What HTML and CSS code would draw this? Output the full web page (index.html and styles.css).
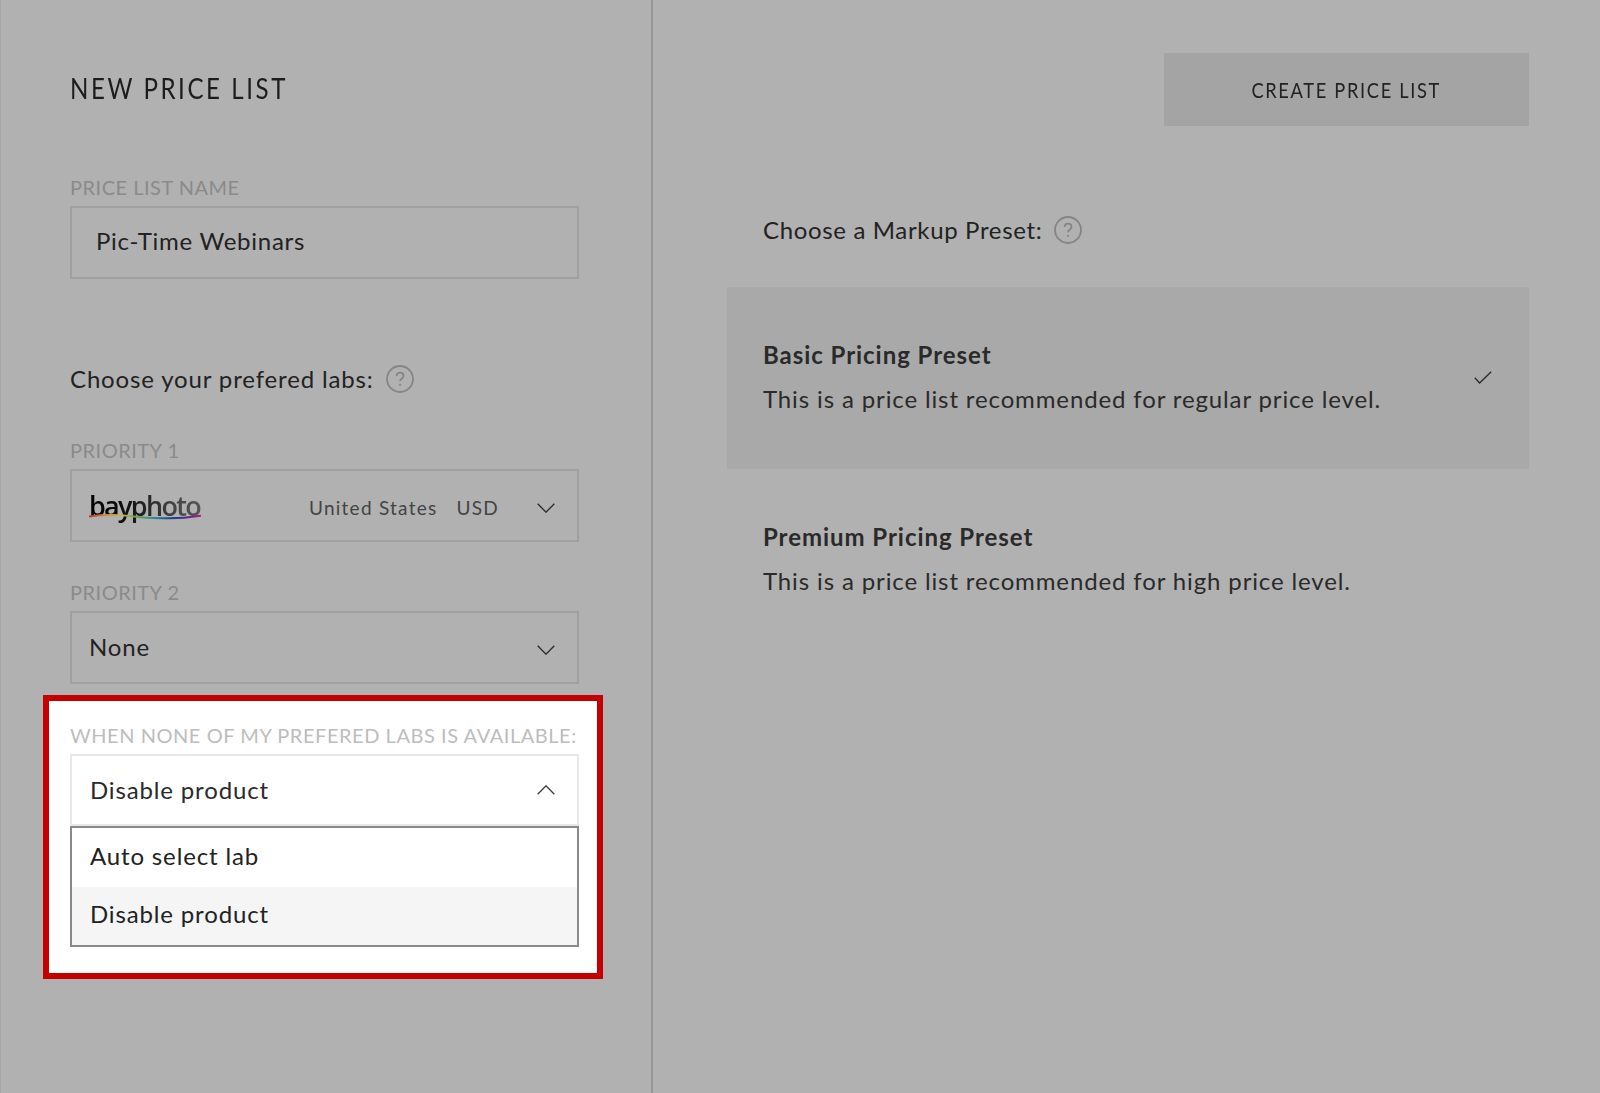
FILE: index.html
```html
<!DOCTYPE html>
<html lang="en">
<head>
<meta charset="utf-8">
<title>New Price List</title>
<link rel="stylesheet" href="styles.css">
</head>
<body>
<main class="page">
  <section class="left">
    <h1 class="title">NEW PRICE LIST</h1>
    <div class="field first">
      <label class="label">PRICE LIST NAME</label>
      <div class="box name"><span class="value">Pic-Time Webinars</span></div>
    </div>
    <div class="prompt labs">Choose your prefered labs:
      <svg class="help" viewBox="0 0 28 28"><circle cx="14" cy="14" r="13" fill="none" stroke="#858585" stroke-width="1.8"/><path d="M10.600 10.800c.2-2 1.600-3.100 3.500-3.100 2 0 3.400 1.200 3.400 3 0 1.400-.8 2.200-1.900 3-1 .7-1.500 1.300-1.500 2.600" fill="none" stroke="#858585" stroke-width="1.800"/><circle cx="14.100" cy="19.800" r="1.100" fill="#858585"/></svg>
    </div>
    <div class="field p1">
      <label class="label">PRIORITY 1</label>
      <div class="box select">
        <div class="logo">
          <span class="logo-text">bayphoto</span>
          <svg class="wave" viewBox="0 0 112 6" preserveAspectRatio="none"><defs><linearGradient id="rainbow"><stop offset="0" stop-color="#b5392c"/><stop offset=".14" stop-color="#d8873a"/><stop offset=".28" stop-color="#c9b93f"/><stop offset=".42" stop-color="#6f9f4a"/><stop offset=".58" stop-color="#2f8a9a"/><stop offset=".74" stop-color="#1d3f8f"/><stop offset=".88" stop-color="#5a2a8c"/><stop offset="1" stop-color="#b21d7c"/></linearGradient></defs><path d="M0 2.500C15 .5 30 .5 45 2.500S60 3.500 75 4.200 100 3.500 112 1.800" fill="none" stroke="url(#rainbow)" stroke-width="2"/></svg>
        </div>
        <span class="lab-meta">United States</span>
        <span class="lab-cur">USD</span>
        <svg class="chev" viewBox="0 0 18 10"><path d="M.7.7 9 9.200 17.300.7" fill="none" stroke="#2a2a2a" stroke-width="1.300"/></svg>
      </div>
    </div>
    <div class="field p2">
      <label class="label">PRIORITY 2</label>
      <div class="box select"><span class="value">None</span>
        <svg class="chev" viewBox="0 0 18 10"><path d="M.7.7 9 9.200 17.300.7" fill="none" stroke="#2a2a2a" stroke-width="1.300"/></svg>
      </div>
    </div>
    <div class="highlight">
      <label class="label light">WHEN NONE OF MY PREFERED LABS IS AVAILABLE:</label>
      <div class="box select open"><span class="value">Disable product</span>
        <svg class="chev" viewBox="0 0 18 10"><path d="M.7 9.300 9 .8l8.300 8.500" fill="none" stroke="#3a3a3a" stroke-width="1.300"/></svg>
      </div>
      <div class="menu">
        <div class="option"><span class="value">Auto select lab</span></div>
        <div class="option active"><span class="value">Disable product</span></div>
      </div>
    </div>
  </section>
  <section class="right">
    <div class="actions"><button class="create"><span class="create-text">CREATE PRICE LIST</span></button></div>
    <div class="prompt markup">Choose a Markup Preset:
      <svg class="help" viewBox="0 0 28 28"><circle cx="14" cy="14" r="13" fill="none" stroke="#858585" stroke-width="1.8"/><path d="M10.600 10.800c.2-2 1.600-3.100 3.500-3.100 2 0 3.400 1.200 3.400 3 0 1.400-.8 2.200-1.900 3-1 .7-1.500 1.300-1.500 2.600" fill="none" stroke="#858585" stroke-width="1.800"/><circle cx="14.100" cy="19.800" r="1.100" fill="#858585"/></svg>
    </div>
    <div class="preset selected">
      <div class="preset-text">
        <div class="preset-name">Basic Pricing Preset</div>
        <div class="preset-desc">This is a price list recommended for regular price level.</div>
      </div>
      <svg class="check" viewBox="0 0 18 13"><path d="M.8 6.800 5.600 12 17.200.8" fill="none" stroke="#2a2a2a" stroke-width="1.300"/></svg>
    </div>
    <div class="preset">
      <div class="preset-text">
        <div class="preset-name">Premium Pricing Preset</div>
        <div class="preset-desc">This is a price list recommended for high price level.</div>
      </div>
    </div>
  </section>
</main>
</body>
</html>
```
FILE: styles.css
```css
* { box-sizing: border-box; }
html, body { margin: 0; height: 100%; }
body {
  background: #b1b1b1;
  color: #1f1f1f;
  font-family: Lato, "Open Sans", sans-serif;
  overflow: hidden;
}
.page { display: flex; height: 1093px; }
.left {
  width: 653px;
  flex: none;
  padding: 72px 0 0 70px;
  border-left: 1px solid #a6a6a6;
  border-right: 2px solid #989898;
}
.title {
  margin: 0 0 0 -1px;
  font-size: 28px;
  line-height: 32px;
  font-weight: 400;
  letter-spacing: 3px;
  color: #1c1c1c;
  transform: scaleX(.86);
  transform-origin: left center;
}
.label {
  display: block;
  font-size: 20px;
  line-height: 20px;
  letter-spacing: .5px;
  color: #8a8a8a;
  margin-bottom: 9px;
  white-space: nowrap;
}
.label.light { color: #bdbdbd; letter-spacing: .55px; }
.box {
  width: 509px;
  height: 73px;
  border: 2px solid #a0a0a0;
  display: flex;
  align-items: center;
  font-size: 24px;
  letter-spacing: .85px;
  color: #222;
}
.first { margin-top: 73px; margin-left: -1px; }
.name { padding-left: 24px; letter-spacing: .73px; }
.name .value { padding-bottom: 4px; }
.prompt {
  display: flex;
  align-items: center;
  font-size: 24px;
  line-height: 30px;
  letter-spacing: .85px;
  color: #222;
}
.labs { margin-top: 85px; margin-left: -1px; }
.help { width: 28px; height: 28px; margin-left: 12px; flex: none; }
.p1 { margin-top: 46px; margin-left: -1px; }
.p2 { margin-top: 40px; margin-left: -1px; }
.select { padding: 0 10px 0 17px; }
.open.select { padding-left: 18px; height: 72px; }
.value { flex: 1; padding-bottom: 2px; }
.logo { position: relative; width: 112px; height: 34px; margin-right: 108px; flex: none; }
.logo-text {
  display: block;
  font-family: "Open Sans", sans-serif;
  font-size: 27px;
  line-height: 34px;
  font-weight: 600;
  letter-spacing: -1.7px;
  background: linear-gradient(90deg, #000 0%, #111 35%, #444 75%, #555 100%);
  -webkit-background-clip: text;
  background-clip: text;
  color: transparent;
}
.wave { position: absolute; left: 0; top: 25px; width: 112px; height: 6px; }
.lab-meta, .lab-cur { font-size: 19px; letter-spacing: 1.25px; color: #444; padding-top: 3px; }
.lab-meta { margin-right: 19px; }
.lab-cur { flex: 1; }
.chev { width: 18px; height: 10px; flex: none; margin-right: 12px; margin-top: 5px; }
.highlight {
  width: 560px;
  margin: 11px 0 0 -28px;
  padding: 24px 20px 26px 21px;
  border: 6px solid #c40000;
  background: #fff;
}
.open { border-color: #e8e8e8; color: #2a2a2a; }
.open .chev { margin-top: 0; }
.menu { width: 509px; border: 2px solid #8a8a8a; height: 121px; }
.option {
  height: 59px;
  padding-left: 18px;
  display: flex;
  align-items: center;
  font-size: 24px;
  letter-spacing: .85px;
  color: #222;
}
.option .value { padding-bottom: 4px; }
.option.active { background: #f5f5f5; height: 58px; }
.option.active .value { padding-bottom: 6px; }
.right { flex: 1; padding: 53px 71px 0 74px; }
.actions { display: flex; justify-content: flex-end; }
.create {
  width: 365px;
  height: 73px;
  border: 0;
  background: #a4a4a4;
  font: inherit;
  font-size: 22px;
  letter-spacing: 2px;
  color: #222;
}
.create-text { display: inline-block; transform: scaleX(.83); }
.markup { margin-top: 89px; padding-left: 36px; letter-spacing: .65px; }
.preset {
  height: 182px;
  padding: 0 36px 2px 36px;
  display: flex;
  align-items: center;
  justify-content: space-between;
}
.markup + .preset { margin-top: 42px; }
.selected { background: #a9a9a9; }
.preset-name { font-size: 24px; line-height: 30px; font-weight: 700; letter-spacing: .95px; color: #2a2a2a; }
.preset-desc { font-size: 24px; line-height: 30px; margin-top: 14px; letter-spacing: .87px; color: #2a2a2a; }
.check { width: 18px; height: 13px; margin-top: 0; margin-right: 1px; }
```
